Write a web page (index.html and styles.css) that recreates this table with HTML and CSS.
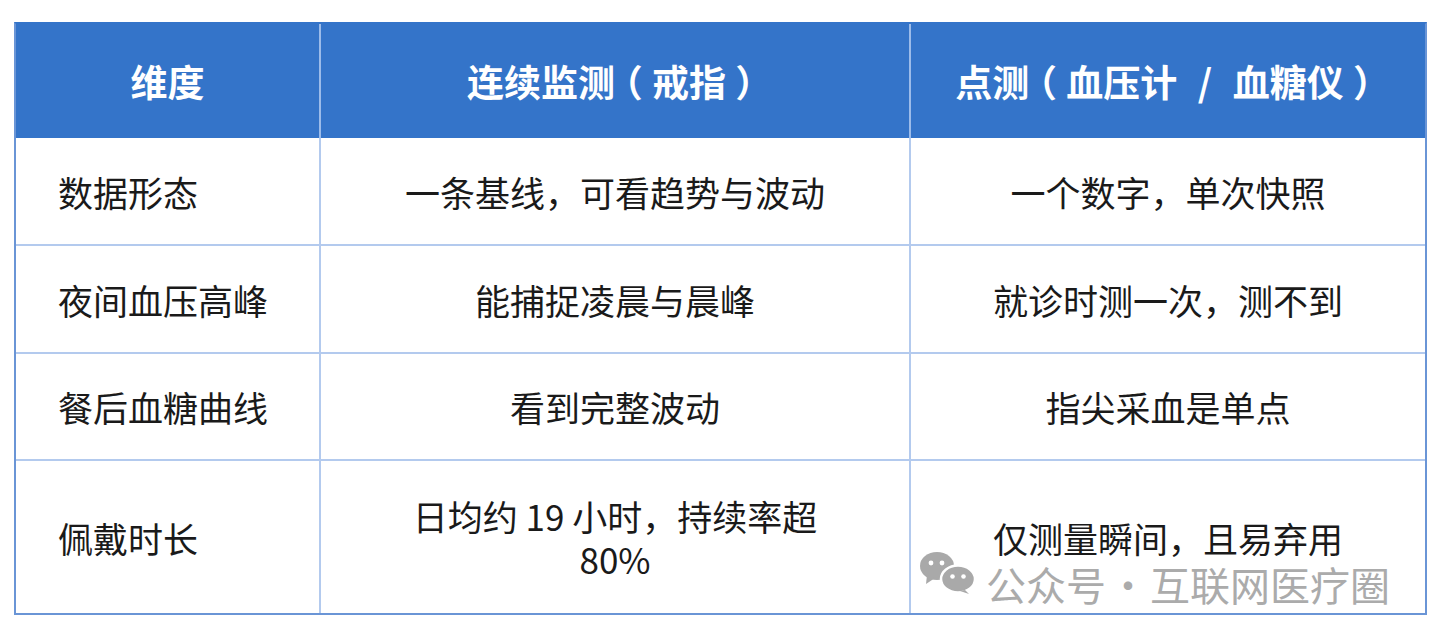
FILE: index.html
```html
<!DOCTYPE html>
<html lang="zh-CN">
<head>
<meta charset="utf-8">
<title>连续监测 vs 点测</title>
<link rel="stylesheet" href="styles.css">
</head>
<body>
<div class="table">
  <div class="cell head">维度</div>
  <div class="cell head">连续监测<span class="p">（</span>戒指<span class="p">）</span></div>
  <div class="cell head last">点测<span class="p">（</span>血压计<span class="slash">/</span>血糖仪<span class="p">）</span></div>

  <div class="cell label">数据形态</div>
  <div class="cell">一条基线，可看趋势与波动</div>
  <div class="cell last">一个数字，单次快照</div>

  <div class="cell label">夜间血压高峰</div>
  <div class="cell">能捕捉凌晨与晨峰</div>
  <div class="cell last">就诊时测一次，测不到</div>

  <div class="cell label">餐后血糖曲线</div>
  <div class="cell">看到完整波动</div>
  <div class="cell last">指尖采血是单点</div>

  <div class="cell label bottom">佩戴时长</div>
  <div class="cell bottom wrap">日均约 19 小时，持续率超 80%</div>
  <div class="cell last bottom">仅测量瞬间，且易弃用</div>

  <div class="watermark">
    <svg class="wm-icon" viewBox="0 0 56 42" width="56" height="42" aria-hidden="true">
      <ellipse cx="17" cy="14" rx="17" ry="14" fill="#a9a9a9"/>
      <path d="M7 23 L6 32 L15 26 Z" fill="#a9a9a9"/>
      <circle cx="11" cy="11" r="2.4" fill="#fff"/>
      <circle cx="22" cy="11" r="2.4" fill="#fff"/>
      <ellipse cx="38" cy="27" rx="17" ry="13.5" fill="#a9a9a9" stroke="#fff" stroke-width="2.5"/>
      <path d="M45 38 L49 42 L40 39 Z" fill="#a9a9a9"/>
      <circle cx="32.5" cy="24.5" r="2.3" fill="#fff"/>
      <circle cx="43.5" cy="24.5" r="2.3" fill="#fff"/>
    </svg>
    <span class="wm-text">公众号<span class="wm-dot">·</span>互联网医疗圈</span>
  </div>
</div>
</body>
</html>
```

FILE: styles.css
```css
* { box-sizing: border-box; }

html, body {
  margin: 0;
  padding: 0;
  background: #ffffff;
}

body {
  font-family: "Noto Sans CJK SC", "Noto Sans", sans-serif;
  color: #1a1a1a;
}

.table {
  position: relative;
  margin: 22px 0 0 14px;
  width: 1413px;
  height: 593px;
  display: grid;
  grid-template-columns: 305px 590px 1fr;
  grid-template-rows: 114px 108px 108px 107px 1fr;
  border: 2px solid #6a95d6;
  border-top-color: #3474c9;
  background: #ffffff;
}

.cell {
  display: flex;
  align-items: center;
  justify-content: center;
  text-align: center;
  font-size: 35px;
  line-height: 43px;
  padding: 0 44px;
  border-right: 2px solid #b3caee;
  border-bottom: 2px solid #b3caee;
}

.cell.last { border-right: none; }
.cell.bottom { border-bottom: none; }

.cell.head {
  background: #3474c9;
  color: #ffffff;
  font-weight: 700;
  font-size: 37px;
  border-bottom: none;
  border-right-color: #9cbcea;
  white-space: pre;
}
.cell.head.last { border-right: none; }

.p {
  display: inline-block;
  width: 1em;
  text-align: center;
  font-feature-settings: "halt" 1;
}

.slash {
  display: inline-block;
  width: 1.5em;
  text-align: center;
}

.cell.label {
  justify-content: flex-start;
  text-align: left;
  padding-left: 42px;
}

.cell.wrap { padding: 0 60px; }

.watermark {
  position: absolute;
  left: 904px;
  top: 528px;
  display: flex;
  align-items: flex-start;
  gap: 10px;
  pointer-events: none;
}

.wm-icon { display: block; }

.wm-text {
  font-size: 40px;
  line-height: 48px;
  color: #ababab;
  font-weight: 400;
  margin-top: 8px;
  white-space: nowrap;
}

.wm-dot {
  display: inline-block;
  width: 44px;
  text-align: center;
}
```
